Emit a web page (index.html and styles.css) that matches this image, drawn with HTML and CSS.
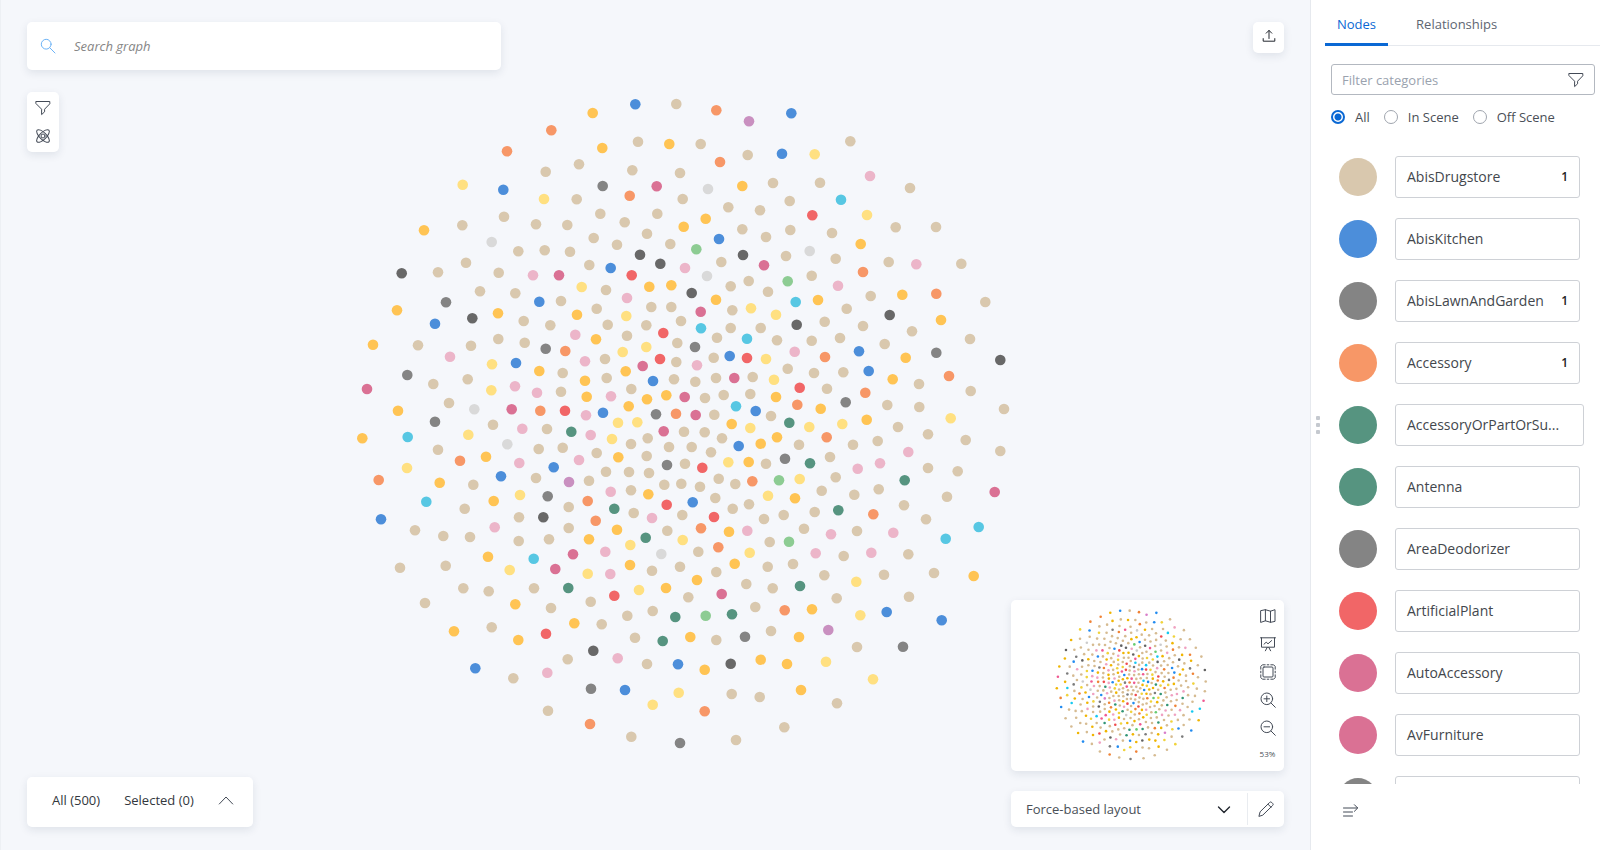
FILE: index.html
```html
<!DOCTYPE html>
<html lang="en">
<head>
<meta charset="utf-8">
<title>Graph explorer</title>
<link rel="stylesheet" href="styles.css">
</head>
<body>
<div class="app">
  <main class="stage">
    <svg class="graph" id="graph" viewBox="0 0 1310 850" role="img" aria-label="Graph"></svg>
    <div class="overlay">
      <div class="overlay-row top">
        <div class="stack">
          <label class="search card">
            <svg class="icon blue" viewBox="0 0 16 16"><circle cx="6.2" cy="6.2" r="4.9"/><path d="M9.8 9.8 15 15"/></svg>
            <input type="search" placeholder="Search graph" aria-label="Search graph">
          </label>
          <div class="tools card">
            <button type="button" aria-label="Filter"><svg class="icon" viewBox="0 0 16 16"><path d="M1.2 1.5h13.6v2.3L9.6 9.2v2.6l-3 2.8V9.2L1.2 3.8z"/></svg></button>
            <button type="button" aria-label="Data science"><svg class="icon" viewBox="0 0 16 16"><ellipse cx="8" cy="8" rx="8.3" ry="3.4" transform="rotate(45 8 8)"/><ellipse cx="8" cy="8" rx="8.3" ry="3.4" transform="rotate(-45 8 8)"/><circle cx="8" cy="8" r="2"/></svg></button>
          </div>
        </div>
        <button class="export card" type="button" aria-label="Export"><svg class="icon small dark" viewBox="0 0 14 14"><path d="M7 9.5V1.5M4.2 4.2 7 1.4l2.8 2.8M1.2 9.6v2.6h11.6V9.6"/></svg></button>
      </div>
      <div class="overlay-row bottom">
        <div class="status card">
          <button type="button">All (500)</button>
          <button type="button">Selected (0)</button>
          <button type="button" aria-label="Expand"><svg class="icon" viewBox="0 0 16 16"><path d="M1.3 12 8 5l6.7 7"/></svg></button>
        </div>
        <div class="side-cards">
          <div class="minimap card">
            <svg class="map" id="minimap" viewBox="167 58 1030 737" role="img" aria-label="Map"></svg>
            <div class="map-tools">
              <button type="button" aria-label="Toggle map"><svg class="icon" viewBox="0 0 16 16"><path d="M1 2.6 5.4 1.7 10.5 3.2 15 1.7V13.4L10.5 14.3 5.4 12.8 1 14.3zM5.4 1.7V12.8M10.5 3.2V14.3"/></svg></button>
              <button type="button" aria-label="Presentation"><svg class="icon" viewBox="0 0 16 16"><path d="M.5 1.8h15M1.5 1.8v9.4h13V1.8M5.4 14.8 7.2 11.4M10.6 14.8 8.8 11.4M4 8.2l2.2-2 1.8 1.6 3.6-3.2"/></svg></button>
              <button type="button" aria-label="Fit to screen"><svg class="icon" viewBox="0 0 16 16"><rect x="3" y="3" width="10" height="10" rx="1"/><path d="M.8 5.2V2.4L2.4.8h2.8M10.800.8h2.800l1.600 1.600v2.800M15.200 10.800v2.800l-1.600 1.600h-2.800M5.200 15.200H2.400L.8 13.600v-2.800M.8 7.200v1.600M15.200 7.200v1.600M7.200.8h1.600M7.200 15.200h1.600"/></svg></button>
              <button type="button" aria-label="Zoom in"><svg class="icon" viewBox="0 0 16 16"><circle cx="6.8" cy="6.8" r="5.8"/><path d="M11 11l4.3 4.3M6.8 4v5.6M4 6.8h5.6"/></svg></button>
              <button type="button" aria-label="Zoom out"><svg class="icon" viewBox="0 0 16 16"><circle cx="6.8" cy="6.8" r="5.8"/><path d="M11 11l4.3 4.3M4 6.8h5.6"/></svg></button>
              <span class="zoom-level">53%</span>
            </div>
          </div>
          <div class="layout card">
            <div class="select-wrap">
              <select aria-label="Layout"><option>Force-based layout</option></select>
              <svg class="icon small dark bold" viewBox="0 0 14 14"><path d="M1.500 5 7 10.500 12.500 5"/></svg>
            </div>
            <button type="button" aria-label="Edit"><svg class="icon" viewBox="0 0 16 16"><path d="M1 15l1.100-4.200L11.600 1.500a1.500 1.500 0 0 1 2.200 0l.8.8a1.500 1.500 0 0 1 0 2.200L5 13.900zM10 3.200l3 3"/></svg></button>
          </div>
        </div>
      </div>
    </div>
  </main>
  <aside class="sidebar">
    <div class="grip"><i></i><i></i><i></i></div>
    <div class="panel">
      <div class="tabs" role="tablist">
        <button type="button" role="tab" aria-selected="true" class="tab active">Nodes</button>
        <button type="button" role="tab" aria-selected="false" class="tab">Relationships</button>
      </div>
      <div class="filters">
        <label class="filter-box">
          <input type="text" placeholder="Filter categories" aria-label="Filter categories">
          <svg class="icon" viewBox="0 0 16 16"><path d="M1.200 1.500h13.600v2.300L9.600 9.200v2.600l-3 2.800V9.200L1.200 3.800z"/></svg>
        </label>
        <div class="radios">
          <label><input type="radio" name="scope" checked>All</label>
          <label><input type="radio" name="scope">In Scene</label>
          <label><input type="radio" name="scope">Off Scene</label>
        </div>
      </div>
      <ul class="categories">
        <li><span class="swatch tan"></span><button type="button"><span>AbisDrugstore</span><b>1</b></button></li>
        <li><span class="swatch blue"></span><button type="button"><span>AbisKitchen</span></button></li>
        <li><span class="swatch grey"></span><button type="button"><span>AbisLawnAndGarden</span><b>1</b></button></li>
        <li><span class="swatch orange"></span><button type="button"><span>Accessory</span><b>1</b></button></li>
        <li><span class="swatch green"></span><button type="button" class="wide"><span>AccessoryOrPartOrSu...</span></button></li>
        <li><span class="swatch green"></span><button type="button"><span>Antenna</span></button></li>
        <li><span class="swatch grey"></span><button type="button"><span>AreaDeodorizer</span></button></li>
        <li><span class="swatch red"></span><button type="button"><span>ArtificialPlant</span></button></li>
        <li><span class="swatch magenta"></span><button type="button"><span>AutoAccessory</span></button></li>
        <li><span class="swatch magenta"></span><button type="button"><span>AvFurniture</span></button></li>
        <li><span class="swatch grey"></span><button type="button" aria-label="Next category"></button></li>
      </ul>
      <div class="panel-foot">
        <button type="button" aria-label="Collapse panel"><svg class="icon" viewBox="0 0 16 16"><path d="M.5 5h14M11.400 1.700 14.700 5l-3.300 3.300M.5 9h9M.5 13h9"/></svg></button>
      </div>
    </div>
  </aside>
</div>
<script src="graph.js"></script>
</body>
</html>
```
FILE: styles.css
```css
* { box-sizing: border-box; }

body {
  margin: 0;
  font-family: "Open Sans", "Noto Sans", sans-serif;
  font-size: 13px;
  line-height: 20px;
  color: #4a4f57;
  background: #f5f7fb;
}

button, input, select { font: inherit; color: inherit; margin: 0; }

button {
  display: flex;
  align-items: center;
  justify-content: center;
  padding: 0;
  border: 0;
  background: none;
  cursor: pointer;
}

.app { display: flex; height: 100vh; overflow: hidden; }

.stage {
  position: relative;
  flex: 1;
  min-width: 0;
  box-shadow: inset 1px 0 #edf0f4;
  background: #f5f7fb;
}

.graph { display: block; width: 100%; height: 100%; }

.overlay {
  position: absolute;
  inset: 0;
  display: flex;
  flex-direction: column;
  justify-content: space-between;
  padding: 22px 26px 23px 27px;
}

.overlay-row { display: flex; justify-content: space-between; }
.top { align-items: flex-start; }
.bottom { align-items: flex-end; }
.stack { display: flex; flex-direction: column; align-items: flex-start; gap: 22px; }

.card {
  background: #fff;
  border-radius: 5px;
  box-shadow: 0 3px 8px rgba(30, 50, 80, 0.1);
}

.icon {
  display: block;
  flex: none;
  width: 16px;
  height: 16px;
  fill: none;
  stroke: #434a56;
  stroke-width: 1;
  stroke-linejoin: round;
  stroke-linecap: round;
}
.icon.small { width: 14px; height: 14px; }
.icon.dark { stroke: #22262e; }
.icon.bold { stroke-width: 1.4; }
.icon.blue { stroke: #6cb3f7; }

.search {
  display: flex;
  align-items: center;
  gap: 18px;
  width: 474px;
  height: 48px;
  padding: 0 13px;
}
.search input {
  flex: 1;
  padding: 0;
  border: 0;
  outline: 0;
  background: none;
  font-style: italic;
}
.search input::placeholder { color: #868686; opacity: 1; }

.tools {
  display: flex;
  flex-direction: column;
  align-items: center;
  gap: 12px;
  width: 32px;
  padding: 8px 0;
}

.export { width: 31px; height: 31px; padding-bottom: 3px; background: #fff; }

.status {
  display: flex;
  align-items: center;
  gap: 24px;
  height: 50px;
  padding: 0 19px 4px 25px;
  color: #33373d;
}

.side-cards { display: flex; flex-direction: column; gap: 20px; width: 273px; }

.minimap { display: flex; height: 171px; }
.map { flex: 1; min-width: 0; height: 171px; filter: saturate(1.7) brightness(0.94); }
.map-tools {
  display: flex;
  flex-direction: column;
  align-items: center;
  gap: 12px;
  width: 33px;
  padding: 8px 0;
}
.zoom-level { font-size: 8px; line-height: 12px; }

.layout { display: flex; height: 36px; padding: 2px 0; }
.select-wrap { position: relative; display: flex; align-items: center; flex: 1; }
.select-wrap select {
  width: 100%;
  height: 100%;
  padding: 0 40px 0 15px;
  border: 0;
  outline: 0;
  appearance: none;
  background: none;
}
.select-wrap .icon { position: absolute; right: 16px; pointer-events: none; }
.layout button { width: 37px; border-left: 1px solid #e9ecf0; }

.sidebar {
  display: flex;
  width: 290px;
  flex: none;
  border-left: 1px solid #e6e9ee;
  background: #fff;
}
.grip {
  display: flex;
  flex-direction: column;
  align-items: center;
  justify-content: center;
  gap: 3px;
  width: 14px;
}
.grip i { width: 4px; height: 4px; border-radius: 1px; background: #c5c9cf; }

.panel { display: flex; flex: 1; flex-direction: column; min-width: 0; }

.tabs { display: flex; gap: 16px; height: 46px; box-shadow: inset 0 -1px #e6e9ee; }
.tab { padding: 4px 12px 0; border-bottom: 3px solid transparent; color: #5e6672; }
.tab.active { border-color: #0a68d4; border-radius: 3px 3px 0 0; color: #0a68d4; }

.filters { padding: 18px 5px 0 6px; }
.filter-box {
  display: flex;
  align-items: center;
  height: 31px;
  padding: 0 10px;
  border: 1px solid #b3b8c0;
  border-radius: 3px;
}
.filter-box input { flex: 1; min-width: 0; padding: 0; border: 0; outline: 0; }
.filter-box input::placeholder { color: #9aa2ae; opacity: 1; }

.radios { display: flex; gap: 14px; padding-top: 12px; }
.radios label { display: flex; align-items: center; gap: 10px; }
.radios input {
  width: 14px;
  height: 14px;
  border: 1px solid #9fa5ae;
  border-radius: 50%;
  appearance: none;
}
.radios input:checked {
  border: 2px solid #0a68d4;
  background: radial-gradient(circle, #0a68d4 3px, #fff 4px);
}

.categories {
  display: flex;
  flex: 1;
  flex-direction: column;
  gap: 20px;
  min-height: 0;
  margin: 29px 0 0;
  padding: 0 20px 0 14px;
  overflow: hidden;
  list-style: none;
}
.categories li { display: flex; flex: none; align-items: center; height: 42px; }
.swatch { width: 38px; height: 38px; flex: none; margin-right: 18px; border-radius: 50%; }
.categories button {
  flex: 1;
  justify-content: space-between;
  height: 42px;
  padding: 0 11px;
  border: 1px solid #ced1d6;
  border-radius: 3px;
  font-size: 14px;
  color: #43474d;
}
.categories button.wide { margin-right: -4px; }
.categories b { font-size: 12px; font-weight: 600; color: #222; }

.panel-foot { height: 66px; padding: 19px 18px; }

.swatch.tan { background: #d9c8ae; }
.swatch.blue { background: #4c8eda; }
.swatch.grey { background: #848484; }
.swatch.orange { background: #f79767; }
.swatch.green { background: #569480; }
.swatch.red { background: #f16667; }
.swatch.magenta { background: #da7194; }

.t { fill: #d9c8ae; }
.b { fill: #4c8eda; }
.g { fill: #848484; }
.d { fill: #686868; }
.r { fill: #f79767; }
.o { fill: #ffc454; }
.y { fill: #ffe081; }
.e { fill: #f16667; }
.m { fill: #da7194; }
.p { fill: #ecb5c9; }
.k { fill: #569480; }
.n { fill: #8dcc93; }
.c { fill: #57c7e3; }
.l { fill: #d9d9d9; }
.v { fill: #c990c0; }
```
FILE: graph.js
```js
// Node positions grouped by region: origin in canvas units, offsets in thirds of a unit.
const regions = [
  [350, 90, "b 856 43;t 979 42;o 728 69;r 604 121;r 471 184;o 757 174;t 864 155;o 958 162;t 687 223;t 587 245;t 847 241;y 338 284;b 460 299;g 758 288;m 920 289;r 839 317;y 582 327;t 680 328;t 751 371;t 922 371;t 824 397;t 462 380;t 337 406;t 558 403;t 652 405;o 222 421;l 425 456;t 891 431;t 731 444;t 801 464;t 961 462;t 505 484;t 584 481;t 660 485;d 870 494;d 931 521;t 348 518;t 718 525;b 782 534;d 155 550;t 264 547;t 446 548;p 549 556;m 627 556;e 845 556;y 695 591;t 768 600;o 898 590;o 964 586;t 390 604;t 496 610;p 831 624;g 288 637;b 568 635;t 633 633;t 904 651;t 964 651;t 740 656"],
  [680, 90, "r 109 61;v 207 94;b 334 70;t 62 162;t 203 195;b 306 191;y 404 193;t 511 154;r 120 216;p 570 258;t 690 294;t 0 249;l 84 297;o 187 288;t 279 279;t 420 278;c 483 329;t 8 327;t 145 352;t 240 361;t 329 333;e 397 376;y 561 375;o 77 386;o 11 410;t 187 418;t 331 420;t 258 441;t 456 429;t 647 412;t 768 411;b 117 447;n 49 478;o 542 462;l 389 483;d 189 495;t 318 498;t 124 516;t 467 506;t 626 516;p 709 523;t 844 521;m 252 526;p 15 534;r 549 546;l 81 558;t 206 573;n 323 574;t 395 557;t 152 589;p 474 587;t 264 605;d 35 609;t 572 618;o 667 614;r 769 611;t 916 636;o 108 629;c 347 636;o 414 630"],
  [350, 310, "o 141 1;o 444 10;b 255 41;d 367 25;t 521 33;t 601 46;o 681 14;t 773 44;y 829 18;t 889 46;e 940 69;o 69 104;t 204 106;t 363 107;t 445 87;t 524 98;p 676 74;o 738 88;t 831 77;y 889 111;g 587 116;r 646 123;y 818 126;t 982 99;p 300 140;y 426 163;b 498 159;o 568 183;p 705 154;t 765 147;m 878 168;e 930 147;t 979 156;g 172 195;t 250 222;t 353 208;p 495 229;t 638 189;o 827 184;o 705 212;t 770 204;b 909 213;t 972 208;m 51 237;y 424 241;p 561 248;t 633 245;t 844 237;o 710 260;p 783 259;o 891 268;o 949 256;t 297 279;l 373 298;o 144 302;m 485 298;r 571 302;e 645 302;o 836 289;b 759 308;p 708 316;g 918 313;r 978 311;g 255 335;t 429 344;p 517 356;t 591 357;k 664 365;y 804 338;y 862 337;m 941 364;c 173 381;o 37 385;y 355 374;p 722 375;y 786 387;t 893 385;t 264 419;l 472 403;t 566 417;t 638 413;t 843 402;t 957 411;t 740 429;o 805 442;t 890 438;r 330 452;o 408 440;p 508 459;p 687 450;g 951 465;y 171 474;b 453 499;b 611 472;t 768 485;t 837 486;t 897 489;r 86 510;o 269 518;t 370 524;t 558 504;v 657 516;t 717 512;t 943 524;y 510 555;p 782 545;t 843 541;o 895 553;c 229 575;o 431 573;g 593 559;r 713 573;e 950 584;t 344 596;t 656 591;k 793 596;t 851 609;p 906 624;b 93 628;t 507 622;d 580 622;r 737 632;p 434 652;t 656 654;o 801 659;t 195 661;t 952 662"],
  [680, 310, "m 62 5;t 157 1;y 213 -5;y 288 14;t 500 -4;d 629 15;t 3 33;c 63 55;t 152 54;t 242 54;d 350 44;t 434 35;t 549 48;o 783 30;t 696 64;t 111 83;c 201 86;t 291 91;t 395 92;t 480 84;t 614 102;t 870 87;g 45 111;b 149 138;t 101 143;p 344 125;r 435 141;b 537 124;o 677 143;g 769 128;d 961 150;e 201 144;y 258 147;p 51 166;t 323 176;t 402 189;t 490 187;b 566 183;r 807 198;t 108 204;m 163 204;t 218 201;y 282 209;o 638 208;t 46 215;t 717 222;e 359 233;t 441 236;r 556 248;t 872 243;t 211 252;t 131 255;m 14 261;t 75 264;o 288 261;t 622 285;t 718 291;g 497 277;r 352 284;o 422 296;c 168 289;b 227 303;t 972 297;t 103 314;m 47 315;t 273 318;k 328 338;o 560 329;y 812 325;o 155 342;y 211 354;y 388 351;y 487 342;t 654 351;t 12 365;t 74 367;t 126 385;o 291 382;r 440 382;t 744 373;t 857 390;o 242 401;b 176 408;t 357 404;t 519 404;t 593 393;t 35 411;t 93 427;p 685 426;t 961 423;g 315 446;t 450 441;y 145 457;o 206 456;t 258 461;k 390 460;p 533 476;p 600 460;t 15 461;e 67 473;t 744 474;t 833 484;t 116 506;t 166 522;r 217 514;n 297 511;y 359 507;t 467 502;k 674 511;t 4 521;t 60 530;m 944 546;t 425 542;t 523 554;t 596 538;t 801 560;t 106 564;y 264 557;o 345 565;b 38 577;t 672 586;t 207 583;t 158 596;t 7 615;e 102 621;t 311 615;t 404 606;k 475 601;r 580 613;t 738 628;t 252 627;r 63 655;t 372 656;c 896 651"],
  [350, 530, "t 280 18;t 360 21;t 506 33;t 597 28;o 717 28;y 841 45;k 887 23;o 414 80;c 551 86;m 669 73;p 766 65;l 934 72;t 150 113;t 287 107;y 479 120;m 616 117;y 713 131;p 781 132;o 840 105;t 906 122;t 340 175;t 416 184;t 552 175;k 655 174;e 793 197;y 867 180;o 948 174;t 225 219;o 496 223;t 603 234;t 722 215;t 908 243;t 832 257;k 976 261;o 312 304;t 425 292;o 505 330;e 588 311;o 673 280;t 755 283;t 855 323;k 938 333;d 730 362;b 376 415;t 653 388;p 592 428;p 803 385;t 891 402;b 984 403;t 490 445;g 723 476;b 825 480;y 986 488;y 908 524;t 594 542;r 720 582;t 844 620;g 990 639"],
  [680, 530, "o 147 5;p 202 2;p 453 13;t 531 3;p 640 8;c 797 26;y 8 30;t 55 65;r 115 52;y 209 68;t 269 36;n 327 35;p 407 70;t 491 78;p 574 68;t 685 73;o 164 101;t 0 110;t 109 126;t 263 110;t 339 102;t 433 136;t 612 134;t 762 129;o 881 138;o 51 150;t 199 162;t 278 175;k 360 168;y 529 155;m 125 192;t 25 202;t 470 205;t 687 200;t 226 231;r 314 241;o 396 238;y 541 256;b 620 246;b 785 271;n 77 257;k 156 253;v 445 300;t 273 303;o 31 321;t 109 330;g 195 320;o 357 321;t 531 351;g 669 350;d 152 401;o 74 419;o 242 389;o 321 402;y 438 395;y 579 448;t 155 492;t 239 501;o 363 480;t 471 520;r 74 544;t 313 592;t 168 630"]
];

const nodes = regions.flatMap(([ox, oy, list]) =>
  list.split(";").map((item) => {
    const [kind, x, y] = item.split(" ");
    return { kind, x: ox + x / 3, y: oy + y / 3 };
  })
);

function draw(id, radius) {
  const svg = document.getElementById(id);
  for (const node of nodes) {
    const dot = document.createElementNS("http://www.w3.org/2000/svg", "circle");
    dot.setAttribute("class", node.kind);
    dot.setAttribute("cx", node.x.toFixed(1));
    dot.setAttribute("cy", node.y.toFixed(1));
    dot.setAttribute("r", radius);
    svg.appendChild(dot);
  }
}

draw("graph", 5.3);
draw("minimap", 5.6);
```
